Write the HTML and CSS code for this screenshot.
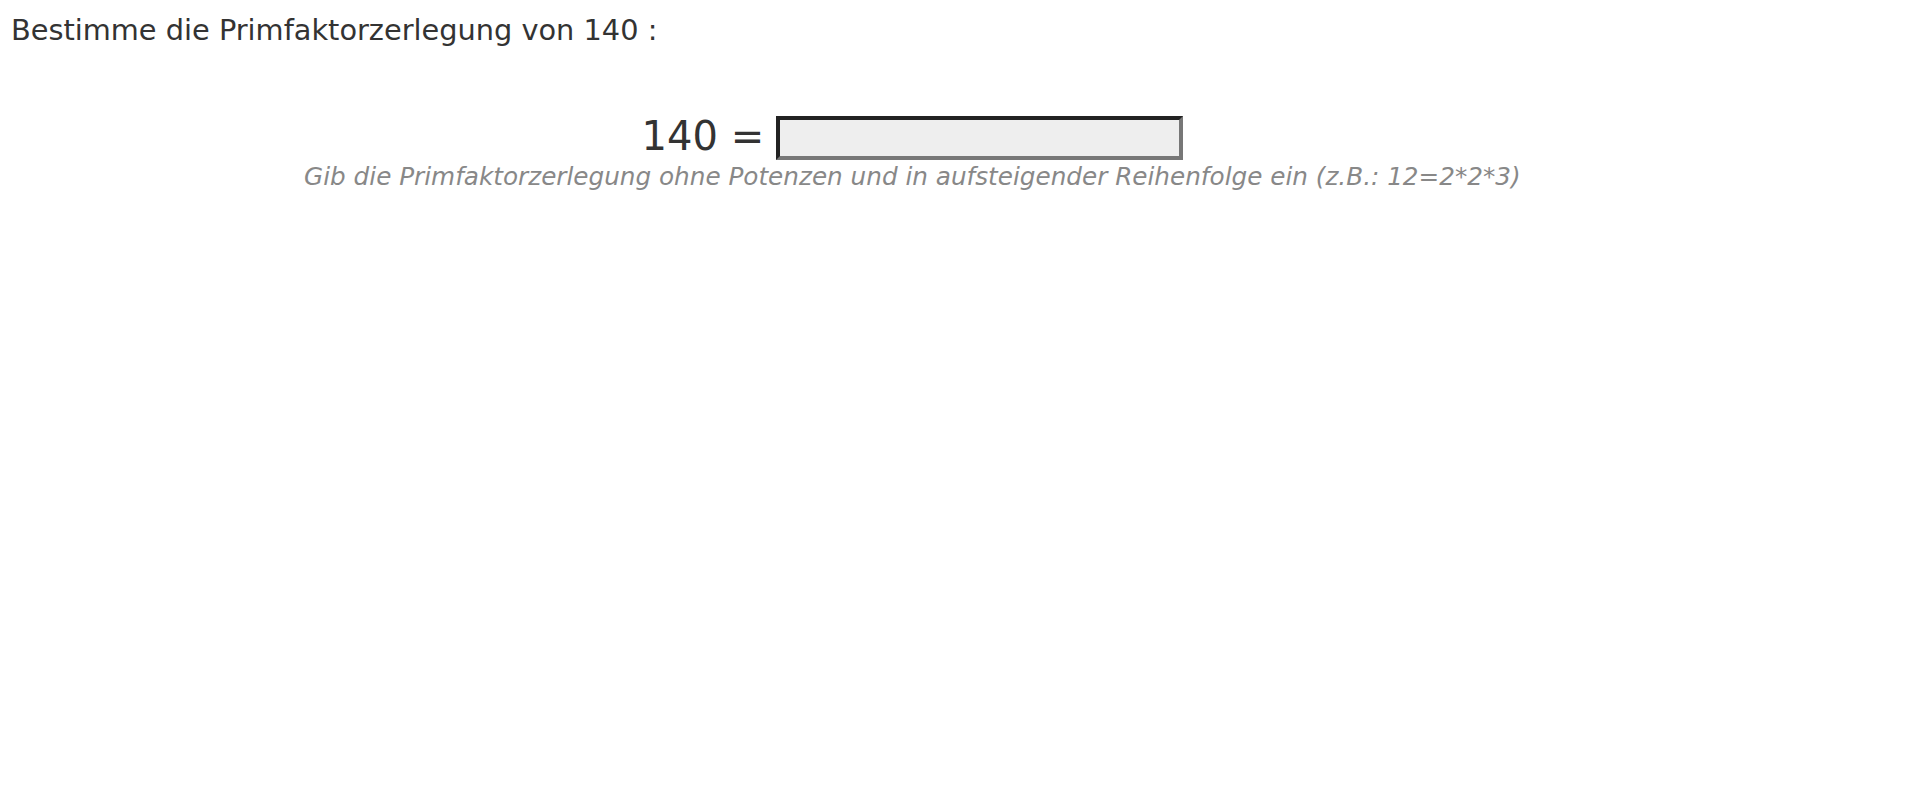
FILE: index.html
```html
<!DOCTYPE html>
<html lang="de">
<head>
<meta charset="utf-8">
<title>Primfaktorzerlegung</title>
<link rel="stylesheet" href="styles.css">
</head>
<body>
<div class="task">
  <p class="question">Bestimme die Primfaktorzerlegung von 140 :</p>
  <div class="answer">
    <div class="equation">
      <span class="lhs">140 =</span>
      <input class="field" type="text" aria-label="Antwort">
    </div>
    <p class="hint">Gib die Primfaktorzerlegung ohne Potenzen und in aufsteigender Reihenfolge ein (z.B.: 12=2*2*3)</p>
  </div>
</div>
</body>
</html>
```
FILE: styles.css
```css
html, body {
  margin: 0;
  padding: 0;
  background: #fff;
}
body {
  padding: 8px;
  font-family: "DejaVu Sans", Verdana, sans-serif;
  color: #333;
}
.task {
  width: 95%;
}
.question {
  margin: 6px 0 0 3px;
  font-size: 28.8px;
  line-height: 32px;
}
.answer {
  margin-top: 70px;
  display: flex;
  flex-direction: column;
  align-items: center;
}
.equation {
  display: flex;
  align-items: center;
  gap: 12px;
}
.lhs {
  font-size: 40px;
  line-height: 40px;
  padding-bottom: 4px;
}
.field {
  box-sizing: border-box;
  width: 407px;
  height: 44px;
  margin: 0;
  padding: 0 6px;
  background: #eee;
  border: 4px solid;
  border-color: #222 #777 #777 #222;
  font: inherit;
  font-size: 24px;
}
.hint {
  margin: 2px 0 0;
  font-size: 24.7px;
  line-height: 30px;
  font-style: italic;
  color: #888;
}
```
